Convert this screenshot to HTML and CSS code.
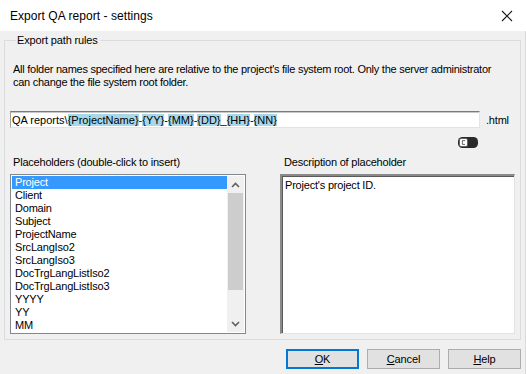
FILE: index.html
```html
<!DOCTYPE html>
<html>
<head>
<meta charset="utf-8">
<link rel="stylesheet" href="styles.css">
</head>
<body>
<div class="window">
  <div class="titlebar">
    <span class="title">Export QA report - settings</span>
    <svg class="close" width="12" height="12" viewBox="0 0 12 12"><path d="M1 1 L11 11 M11 1 L1 11" stroke="#1a1a1a" stroke-width="1.1" fill="none"/></svg>
  </div>
  <div class="client">
    <fieldset class="group">
      <legend class="legend">Export path rules</legend>
      <p class="info">All folder names specified here are relative to the project's file system root. Only the server administrator<br>can change the file system root folder.</p>
      <div class="pathrow">
        <div class="pathbox"><span>QA reports\</span><span class="hl">{ProjectName}</span><span>-</span><span class="hl">{YY}</span><span>-</span><span class="hl">{MM}</span><span>-</span><span class="hl">{DD}</span><span>_</span><span class="hl">{HH}</span><span>-</span><span class="hl">{NN}</span></div>
        <span class="ext">.html</span>
      </div>
      <div class="togglerow">
        <svg class="toggle" width="20" height="11" viewBox="0 0 20 11">
          <rect x="0" y="0" width="20" height="11" rx="4.5" fill="#2a2a2a"/>
          <rect x="1.5" y="1.5" width="8" height="8" rx="1.5" fill="#ffffff" stroke="#555" stroke-width="0.8"/>
          <path d="M7 3.6 H4.4 V7.4 H7" stroke="#666" stroke-width="1" fill="none"/>
        </svg>
      </div>
      <div class="columns">
        <div class="col left">
          <div class="label">Placeholders (double-click to insert)</div>
          <div class="listbox">
            <ul class="items">
              <li class="sel">Project</li>
              <li>Client</li>
              <li>Domain</li>
              <li>Subject</li>
              <li>ProjectName</li>
              <li>SrcLangIso2</li>
              <li>SrcLangIso3</li>
              <li>DocTrgLangListIso2</li>
              <li>DocTrgLangListIso3</li>
              <li>YYYY</li>
              <li>YY</li>
              <li>MM</li>
            </ul>
            <div class="scrollbar">
              <div class="arrow"><svg width="9" height="6" viewBox="0 0 9 6"><path d="M1 5 L4.5 1.5 L8 5" stroke="#606060" stroke-width="1.6" fill="none"/></svg></div>
              <div class="track"><div class="thumb"></div></div>
              <div class="arrow"><svg width="9" height="6" viewBox="0 0 9 6"><path d="M1 1 L4.5 4.5 L8 1" stroke="#606060" stroke-width="1.6" fill="none"/></svg></div>
            </div>
          </div>
        </div>
        <div class="col right">
          <div class="label desc-label">Description of placeholder</div>
          <div class="descbox">Project's project ID.</div>
        </div>
      </div>
    </fieldset>
    <div class="buttons">
      <button class="btn default"><u>O</u>K</button>
      <button class="btn"><u>C</u>ancel</button>
      <button class="btn"><u>H</u>elp</button>
    </div>
  </div>
</div>
</body>
</html>
```
FILE: styles.css
```css
* { box-sizing: border-box; }
html, body { margin: 0; padding: 0; }
body {
  width: 526px;
  height: 374px;
  overflow: hidden;
  background: #f0f0f0;
  font-family: "Liberation Sans", Arial, sans-serif;
  font-size: 11px;
  color: #000;
}
.window {
  width: 526px;
  height: 374px;
  display: flex;
  flex-direction: column;
}
.titlebar {
  height: 31px;
  background: #ffffff;
  display: flex;
  align-items: center;
  justify-content: space-between;
  padding: 0 13px 0 10px;
}
.title {
  font-size: 12px;
  color: #000;
  letter-spacing: 0.05px;
}
.close { display: block; }
.client {
  flex: 1;
  border-right: 1px solid #dadada;
  padding: 0 4px 0 4px;
  display: flex;
  flex-direction: column;
}
.group {
  margin: 3px 0 0 0;
  padding: 0 5px 5px 5px;
  border: 1px solid #dcdcdc;
  min-width: 0;
}
.legend {
  margin-left: 6px;
  padding: 0 2px 0 1px;
  line-height: 13px;
  letter-spacing: -0.15px;
}
.info {
  margin: 16px 0 0 3px;
  line-height: 13px;
  letter-spacing: -0.26px;
}
.pathrow {
  margin-top: 22px;
  display: flex;
  align-items: center;
  gap: 6px;
}
.pathbox {
  width: 470px;
  height: 17px;
  background: #fff;
  border-top: 1px solid #7a7a7a;
  border-left: 1px solid #a0a0a0;
  border-right: 1px solid #e3e3e3;
  border-bottom: 1px solid #e3e3e3;
  box-shadow: inset 0 1px 0 #c8c8c8;
  padding: 1px 0 0 1px;
  line-height: 14px;
  white-space: nowrap;
  letter-spacing: 0;
}
.hl { background: #a8d7e8; }
.ext { letter-spacing: -0.2px; }
.togglerow {
  display: flex;
  justify-content: flex-end;
  padding-right: 37px;
  margin-top: 9px;
  height: 11px;
}
.toggle { display: block; }
.columns {
  margin-top: 8px;
  display: flex;
  justify-content: space-between;
}
.col { display: flex; flex-direction: column; }
.left { width: 236px; }
.right { width: 235px; }
.label {
  line-height: 13px;
  padding-left: 3px;
  letter-spacing: -0.2px;
  margin-bottom: 5px;
}
.desc-label { padding-left: 4px; }
.listbox {
  height: 160px;
  background: #fff;
  border: 1px solid #828790;
  display: flex;
  padding: 1px 1px 1px 1px;
}
.items {
  list-style: none;
  margin: 0;
  padding: 0;
  flex: 1;
  overflow: hidden;
}
.items li {
  height: 13px;
  line-height: 13px;
  padding-left: 3px;
  letter-spacing: -0.2px;
  white-space: nowrap;
}
.items li.sel {
  background: #3399ff;
  color: #fff;
}
.scrollbar {
  width: 17px;
  display: flex;
  flex-direction: column;
  background: #f0f0f0;
}
.arrow {
  height: 17px;
  display: flex;
  align-items: center;
  justify-content: center;
}
.arrow svg { display: block; }
.track {
  flex: 1;
  display: flex;
  flex-direction: column;
}
.thumb {
  height: 97px;
  background: #cdcdcd;
  margin: 0 1px;
}
.descbox {
  height: 160px;
  background: #fff;
  border-top: 2px solid #8a8a8a;
  border-left: 2px solid #8a8a8a;
  border-right: 1px solid #e3e3e3;
  border-bottom: 1px solid #e3e3e3;
  box-shadow: inset 1px 1px 0 #5a5a5a;
  padding: 3px 0 0 3px;
  line-height: 13px;
  letter-spacing: -0.2px;
}
.buttons {
  margin-top: 9px;
  display: flex;
  justify-content: flex-end;
  gap: 8px;
}
.btn {
  width: 73px;
  height: 20px;
  background: #e1e1e1;
  border: 1px solid #adadad;
  font-family: "Liberation Sans", Arial, sans-serif;
  font-size: 11px;
  color: #000;
  padding: 0;
  margin: 0;
  line-height: 16px;
  letter-spacing: -0.1px;
}
.btn.default {
  border: 2px solid #0078d7;
}
```
